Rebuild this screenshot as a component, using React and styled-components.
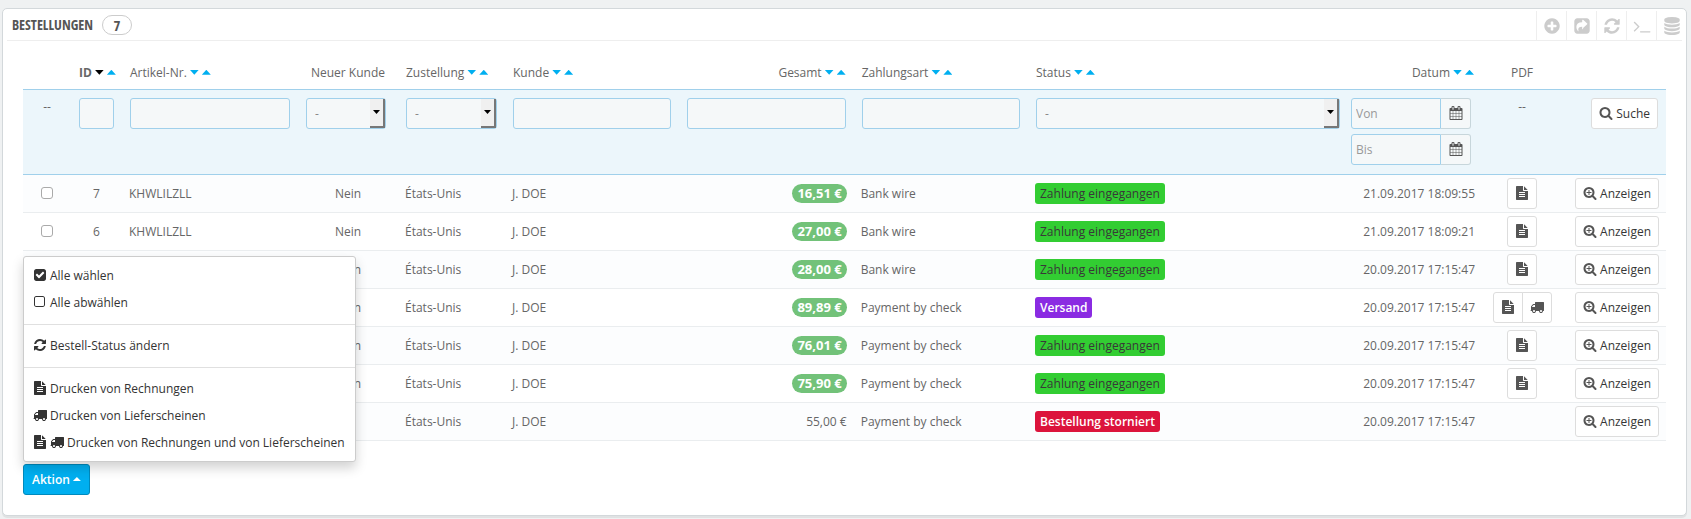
import React from "react";
import styled, { createGlobalStyle, css } from "styled-components";

const GlobalStyle = createGlobalStyle`
  *, *::before, *::after { box-sizing: border-box; }
  body {
    margin: 0;
    background: #eff1f2;
    color: #666;
    font: 12px/17px "Open Sans", "Noto Sans", sans-serif;
  }
  button, input, select { font: inherit; color: inherit; margin: 0; }
`;

/* ---------- icons (1792-unit grid) ---------- */

const paths = {
  plus: "M1344 960v-128q0-26-19-45t-45-19h-256v-256q0-26-19-45t-45-19h-128q-26 0-45 19t-19 45v256h-256q-26 0-45 19t-19 45v128q0 26 19 45t45 19h256v256q0 26 19 45t45 19h128q26 0 45-19t19-45v-256h256q26 0 45-19t19-45zm320-64q0 209-103 385.5t-279.5 279.5-385.5 103-385.5-103-279.5-279.5-103-385.5 103-385.5 279.5-279.5 385.5-103 385.5 103 279.5 279.5 103 385.5z",
  share: "M1005 1085l410-370q25-25 0-60l-410-370q-30-25-60-10-30 15-30 50v190q-300 5-440 130t-140 360q0 220 150 390 30 30 50 15 18-12 8-50-55-200 35-300 85-95 337-95v190q0 35 30 50 30 10 60-20zm659-669v960q0 119-84.5 203.5t-203.5 84.5h-960q-119 0-203.5-84.5t-84.5-203.5v-960q0-119 84.5-203.5t203.5-84.5h960q119 0 203.5 84.5t84.5 203.5z",
  refresh: "M1639 1056q0 5-1 7-64 268-268 434.5t-478 166.5q-146 0-282.5-55t-243.5-157l-129 129q-19 19-45 19t-45-19-19-45v-448q0-26 19-45t45-19h448q26 0 45 19t19 45-19 45l-137 137q71 66 161 102t187 36q134 0 250-65t186-179q11-17 53-117 8-23 30-23h192q13 0 22.5 9.5t9.5 22.5zm25-800v448q0 26-19 45t-45 19h-448q-26 0-45-19t-19-45 19-45l138-138q-148-137-349-137-134 0-250 65t-186 179q-11 17-53 117-8 23-30 23h-199q-13 0-22.5-9.5t-9.5-22.5v-7q65-268 270-434.5t480-166.5q146 0 284 55.5t245 156.5l130-129q19-19 45-19t45 19 19 45z",
  terminal: "M649 983l-466 466q-10 10-23 10t-23-10l-50-50q-10-10-10-23t10-23l393-393-393-393q-10-10-10-23t10-23l50-50q10-10 23-10t23 10l466 466q10 10 10 23t-10 23zm1079 457v64q0 14-9 23t-23 9h-960q-14 0-23-9t-9-23v-64q0-14 9-23t23-9h960q14 0 23 9t9 23z",
  database: "M896 768q237 0 443-43t325-127v170q0 69-103 128t-280 93.5-385 34.5-385-34.5-280-93.5-103-128v-170q119 84 325 127t443 43zm0 768q237 0 443-43t325-127v170q0 69-103 128t-280 93.5-385 34.5-385-34.5-280-93.5-103-128v-170q119 84 325 127t443 43zm0-384q237 0 443-43t325-127v170q0 69-103 128t-280 93.5-385 34.5-385-34.5-280-93.5-103-128v-170q119 84 325 127t443 43zm0-1152q208 0 385 34.5t280 93.5 103 128v128q0 69-103 128t-280 93.5-385 34.5-385-34.5-280-93.5-103-128v-128q0-69 103-128t280-93.5 385-34.5z",
  search: "M1216 832q0-185-131.5-316.5t-316.5-131.5-316.5 131.5-131.5 316.5 131.5 316.5 316.5 131.5 316.5-131.5 131.5-316.5zm512 832q0 52-38 90t-90 38q-54 0-90-38l-343-342q-179 124-399 124-143 0-273.5-55.5t-225-150-150-225-55.5-273.5 55.5-273.5 150-225 225-150 273.5-55.5 273.5 55.5 225 150 150 225 55.5 273.5q0 220-124 399l343 343q37 37 37 90z",
  zoomIn: "M1088 800v64q0 13-9.5 22.5t-22.5 9.5h-224v224q0 13-9.5 22.5t-22.5 9.5h-64q-13 0-22.5-9.5t-9.5-22.5v-224h-224q-13 0-22.5-9.5t-9.5-22.5v-64q0-13 9.5-22.5t22.5-9.5h224v-224q0-13 9.5-22.5t22.5-9.5h64q13 0 22.5 9.5t9.5 22.5v224h224q13 0 22.5 9.5t9.5 22.5zm128 32q0-185-131.5-316.5t-316.5-131.5-316.5 131.5-131.5 316.5 131.5 316.5 316.5 131.5 316.5-131.5 131.5-316.5zm512 832q0 53-37.5 90.5t-90.5 37.5q-54 0-90-38l-343-342q-179 124-399 124-143 0-273.5-55.5t-225-150-150-225-55.5-273.5 55.5-273.5 150-225 225-150 273.5-55.5 273.5 55.5 225 150 150 225 55.5 273.5q0 220-124 399l343 343q37 37 37 90z",
  file: "M1596 476q14 14 28 36h-472v-472q22 14 36 28zm-476 164h544v1056q0 40-28 68t-68 28h-1344q-40 0-68-28t-28-68v-1600q0-40 28-68t68-28h800v544q0 40 28 68t68 28zm160 736v-64q0-14-9-23t-23-9h-704q-14 0-23 9t-9 23v64q0 14 9 23t23 9h704q14 0 23-9t9-23zm0-256v-64q0-14-9-23t-23-9h-704q-14 0-23 9t-9 23v64q0 14 9 23t23 9h704q14 0 23-9t9-23zm0-256v-64q0-14-9-23t-23-9h-704q-14 0-23 9t-9 23v64q0 14 9 23t23 9h704q14 0 23-9t9-23z",
  truck: "M640 1408q0-52-38-90t-90-38-90 38-38 90 38 90 90 38 90-38 38-90zm-384-512h384v-256h-158q-13 0-22 9l-195 195q-9 9-9 22v30zm1280 512q0-52-38-90t-90-38-90 38-38 90 38 90 90 38 90-38 38-90zm256-1088v1024q0 15-4 26.5t-13.5 18.5-16.5 11.5-23.5 6-22.5 2-25.5 0-22.5-.5q0 106-75 181t-181 75-181-75-75-181h-384q0 106-75 181t-181 75-181-75-75-181h-64q-3 0-22.5.5t-25.5 0-22.5-2-23.5-6-16.5-11.5-13.5-18.5-4-26.5q0-26 19-45t45-19v-320q0-8-.5-35t0-38 2.5-34.5 6.5-37 14-30.5 22.5-30l198-198q19-19 50.5-32t58.5-13h160v-192q0-26 19-45t45-19h1024q26 0 45 19t19 45z",
  calendar: "M192 1664h288v-288h-288v288zm352 0h320v-288h-320v288zm-352-352h288v-320h-288v320zm352 0h320v-320h-320v320zm-352-384h288v-288h-288v288zm736 736h320v-288h-320v288zm-384-736h320v-288h-320v288zm768 736h288v-288h-288v288zm-384-352h320v-320h-320v320zm-352-864v-288q0-13-9.5-22.5t-22.5-9.5h-64q-13 0-22.5 9.5t-9.5 22.5v288q0 13 9.5 22.5t22.5 9.5h64q13 0 22.5-9.5t9.5-22.5zm736 864h288v-320h-288v320zm-384-384h320v-288h-320v288zm384 0h288v-288h-288v288zm32-480v-288q0-13-9.5-22.5t-22.5-9.5h-64q-13 0-22.5 9.5t-9.5 22.5v288q0 13 9.5 22.5t22.5 9.5h64q13 0 22.5-9.5t9.5-22.5zm384-64v1280q0 52-38 90t-90 38h-1408q-52 0-90-38t-38-90v-1280q0-52 38-90t90-38h128v-96q0-66 47-113t113-47h64q66 0 113 47t47 113v96h384v-96q0-66 47-113t113-47h64q66 0 113 47t47 113v96h128q52 0 90 38t38 90z",
  checked: "M813 1299l614-614q19-19 19-45t-19-45l-102-102q-19-19-45-19t-45 19l-467 467-211-211q-19-19-45-19t-45 19l-102 102q-19 19-19 45t19 45l358 358q19 19 45 19t45-19zm851-883v960q0 119-84.5 203.5t-203.5 84.5h-960q-119 0-203.5-84.5t-84.5-203.5v-960q0-119 84.5-203.5t203.5-84.5h960q119 0 203.5 84.5t84.5 203.5z",
  square: "M1248 256h-832q-66 0-113 47t-47 113v832q0 66 47 113t113 47h832q66 0 113-47t47-113v-832q0-66-47-113t-113-47zm288 160v832q0 119-84.5 203.5t-203.5 84.5h-832q-119 0-203.5-84.5t-84.5-203.5v-832q0-119 84.5-203.5t203.5-84.5h832q119 0 203.5 84.5t84.5 203.5z",
};

const Svg = styled.svg`
  flex: none;
  display: block;
  width: ${(p) => p.$size}px;
  height: ${(p) => p.$size}px;
  fill: currentColor;
`;

function Icon({ name, size = 14 }) {
  return (
    <Svg $size={size} viewBox="0 0 1792 1792" aria-hidden="true">
      <path d={paths[name]} />
    </Svg>
  );
}

/* ---------- panel ---------- */

const Page = styled.main`
  padding: 8px 4px 4px 2px;
`;

const Panel = styled.section`
  background: #fff;
  border: 1px solid #d3d8db;
  border-radius: 5px;
  box-shadow: 0 2px 0 rgba(0, 0, 0, 0.06);
  padding: 0 4px 20px;
`;

const Heading = styled.header`
  display: flex;
  align-items: stretch;
  justify-content: space-between;
  height: 32px;
  border-bottom: 1px solid #eee;
`;

const Title = styled.h1`
  display: flex;
  align-items: center;
  gap: 9px;
  margin: 0;
  padding-left: 5px;
  color: #555;
  font: 400 14px/20px "Ubuntu Condensed", "Open Sans Condensed", "Liberation Sans Narrow", "Liberation Sans", sans-serif;
  text-transform: uppercase;
`;

const Count = styled.span`
  width: 30px;
  height: 20px;
  border: 1px solid #ccc;
  border-radius: 10px;
  font-size: 15px;
  font-weight: 700;
  line-height: 18px;
  text-align: center;
`;

const Tools = styled.nav`
  display: flex;
  margin-right: -4px;
  padding-top: 2px;
`;

const Tool = styled.a`
  display: grid;
  place-items: center;
  width: 30px;
  border-left: 1px solid #eee;
  color: #ccc;
`;

const Body = styled.div`
  padding: 16px 16px 0;
`;

/* ---------- table ---------- */

const Table = styled.table`
  width: 100%;
  table-layout: fixed;
  border-collapse: collapse;
`;

const Col = styled.col`
  width: ${(p) => (p.$w ? `${p.$w}px` : "auto")};
`;

const HeadCell = styled.th`
  height: 32px;
  padding: 0 8px 1px;
  font-weight: ${(p) => (p.$bold ? 700 : 400)};
  text-align: ${(p) => p.$align || "left"};
  white-space: nowrap;
`;

const HeadInner = styled.span`
  display: inline-flex;
  align-items: center;
  gap: 3px;
`;

const Sort = styled.button`
  width: 9px;
  height: 5px;
  padding: 0;
  border: 0;
  background: ${(p) => (p.$active ? "#000" : "#00aff0")};
  clip-path: ${(p) => (p.$up ? "polygon(50% 0, 100% 100%, 0 100%)" : "polygon(0 0, 100% 0, 50% 100%)")};
`;

const FilterRow = styled.tr`
  height: 85px;
  background: #ecf6fb;
  border: solid #a0d0eb;
  border-width: 1px 0;
`;

const FilterCell = styled.td`
  padding: ${(p) => (p.$tight ? "8px 3px 8px 8px" : "8px")};
  vertical-align: top;
  text-align: ${(p) => p.$align || "left"};
`;

const field = css`
  display: block;
  width: 100%;
  height: 31px;
  padding: 0 8px;
  border: 1px solid #a0d0eb;
  border-radius: 3px;
  background: #f5f8f9;
  color: #888;
`;

const TextField = styled.input`
  ${field}
`;

const SelectBox = styled.div`
  position: relative;
  max-width: ${(p) => (p.$max ? `${p.$max}px` : "none")};
`;

const SelectField = styled.select`
  ${field}
  appearance: none;
`;

const SelectArrow = styled.span`
  position: absolute;
  inset: 1px 1px 1px auto;
  display: grid;
  place-items: center;
  width: 15px;
  background: #f0f0f0;
  border: solid #777;
  border-width: 0 2px 2px 0;
  pointer-events: none;

  &::after {
    content: "";
    width: 7px;
    height: 4px;
    background: #000;
    clip-path: polygon(0 0, 100% 0, 50% 100%);
  }
`;

const DateStack = styled.div`
  display: grid;
  gap: 5px;
  width: 120px;
`;

const DateGroup = styled.div`
  display: flex;
`;

const DateField = styled.input`
  ${field}
  flex: 1;
  min-width: 0;
  padding: 0 4px;
  border-radius: 3px 0 0 3px;
  &::placeholder { color: #999; opacity: 1; }
`;

const DateAddon = styled.button`
  display: grid;
  place-items: center;
  width: 30px;
  height: 31px;
  padding: 0;
  border: 1px solid #c7d6db;
  border-left: 0;
  border-radius: 0 3px 3px 0;
  background: #f5f8f9;
  color: #555;
`;

const Row = styled.tr`
  height: 38px;
  border-bottom: 1px solid #eaedef;
  &:nth-child(odd) { background: #fcfdfe; }
`;

const Cell = styled.td`
  padding: 3px 7px;
  text-align: ${(p) => p.$align || "left"};
  white-space: nowrap;
`;

const Check = styled.input`
  appearance: none;
  display: block;
  width: 12px;
  height: 12px;
  margin: 0 auto;
  border: 1px solid #aaa;
  border-radius: 3px;
  background: #fff;
`;

const Amount = styled.span`
  ${(p) =>
    p.$paid &&
    css`
      display: inline-block;
      padding: 0 5px;
      border-radius: 10px;
      background: #72c279;
      color: #fff;
      font-size: 13px;
      font-weight: 700;
      line-height: 19px;
    `}
`;

const tones = {
  paid: ["#32cd32", "#383838", 400],
  shipped: ["#8a2be2", "#fff", 600],
  cancelled: ["#dc143c", "#fff", 600],
};

const Status = styled.span`
  display: inline-block;
  padding: 0 5px;
  border-radius: 3px;
  background: ${(p) => tones[p.$tone][0]};
  color: ${(p) => tones[p.$tone][1]};
  font-weight: ${(p) => tones[p.$tone][2]};
  line-height: 21px;
`;

const Button = styled.button`
  display: inline-flex;
  align-items: center;
  justify-content: center;
  gap: 3px;
  height: 31px;
  padding: 0 7px;
  border: 1px solid #ddd;
  border-radius: 3px;
  background: #fff;
  color: #363636;
  vertical-align: top;
  svg { color: #555; }
`;

const ButtonGroup = styled.div`
  display: flex;
  justify-content: center;

  ${Button}:not(:first-child) {
    margin-left: -1px;
    border-radius: 0 3px 3px 0;
  }
  ${Button}:first-child:not(:last-child) { border-radius: 3px 0 0 3px; }
`;

/* ---------- bulk actions ---------- */

const Bulk = styled.div`
  position: relative;
  display: inline-block;
  margin-top: 23px;
  vertical-align: top;
`;

const BulkButton = styled.button`
  display: flex;
  align-items: center;
  gap: 3px;
  height: 31px;
  padding: 0 8px;
  border: 1px solid #008abd;
  border-radius: 3px;
  background: #00aff0;
  color: #fff;
  font-weight: 600;
`;

const Caret = styled.span`
  width: 8px;
  height: 4px;
  background: currentColor;
  clip-path: polygon(50% 0, 100% 100%, 0 100%);
`;

const Menu = styled.ul`
  position: absolute;
  left: 0;
  bottom: calc(100% + 2px);
  margin: 0;
  padding: 5px 0;
  list-style: none;
  background: #fff;
  border: 1px solid #ccc;
  border-radius: 3px;
  box-shadow: 0 6px 12px rgba(0, 0, 0, 0.18);
  color: #333;
`;

const MenuLink = styled.a`
  display: flex;
  align-items: center;
  gap: 3px;
  height: 27px;
  padding: 0 10px 0 9px;
  color: inherit;
  text-decoration: none;
  white-space: nowrap;
`;

const Divider = styled.li`
  height: 1px;
  margin: 8px 0 7px;
  background: #e0e0e0;
`;

/* ---------- data ---------- */

const tools = [
  ["plus", "Neu"],
  ["share", "Exportieren"],
  ["refresh", "Aktualisieren"],
  ["terminal", "SQL anzeigen"],
  ["database", "SQL exportieren"],
];

const columns = [
  { width: 48 },
  { label: "ID", width: 51, sort: true, bold: true },
  { label: "Artikel-Nr.", width: 176, sort: true },
  { label: "Neuer Kunde", width: 100, align: "center" },
  { label: "Zustellung", width: 107, sort: true },
  { label: "Kunde", sort: true },
  { label: "Gesamt", sort: true, align: "right" },
  { label: "Zahlungsart", sort: true },
  { label: "Status", width: 315, sort: true },
  { label: "Datum", width: 139, sort: true, align: "right" },
  { label: "PDF", width: 80, align: "center" },
  { width: 104 },
];

const orders = [
  [7, "16,51 €", "Bank wire", "paid", "21.09.2017 18:09:55", ["file"]],
  [6, "27,00 €", "Bank wire", "paid", "21.09.2017 18:09:21", ["file"]],
  [5, "28,00 €", "Bank wire", "paid", "20.09.2017 17:15:47", ["file"]],
  [4, "89,89 €", "Payment by check", "shipped", "20.09.2017 17:15:47", ["file", "truck"]],
  [3, "76,01 €", "Payment by check", "paid", "20.09.2017 17:15:47", ["file"]],
  [2, "75,90 €", "Payment by check", "paid", "20.09.2017 17:15:47", ["file"]],
  [1, "55,00 €", "Payment by check", "cancelled", "20.09.2017 17:15:47", []],
];

const statusText = {
  paid: "Zahlung eingegangen",
  shipped: "Versand",
  cancelled: "Bestellung storniert",
};

const pdfLabel = { file: "Rechnung", truck: "Lieferschein" };

const menu = [
  [["checked"], "Alle wählen"],
  [["square"], "Alle abwählen"],
  null,
  [["refresh"], "Bestell-Status ändern"],
  null,
  [["file"], "Drucken von Rechnungen"],
  [["truck"], "Drucken von Lieferscheinen"],
  [["file", "truck"], "Drucken von Rechnungen und von Lieferscheinen"],
];

function Select({ label, max }) {
  return (
    <SelectBox $max={max}>
      <SelectField aria-label={label}>
        <option>-</option>
      </SelectField>
      <SelectArrow />
    </SelectBox>
  );
}

function DateInput({ label }) {
  return (
    <DateGroup>
      <DateField placeholder={label} aria-label={`Datum ${label}`} />
      <DateAddon type="button" aria-label={`Kalender ${label}`}>
        <Icon name="calendar" />
      </DateAddon>
    </DateGroup>
  );
}

function Header({ label, sort, bold, align }) {
  return (
    <HeadCell scope="col" $bold={bold} $align={align}>
      <HeadInner>
        {label}
        {sort && (
          <>
            <Sort type="button" $active={bold} aria-label={`${label} absteigend`} />
            <Sort type="button" $up aria-label={`${label} aufsteigend`} />
          </>
        )}
      </HeadInner>
    </HeadCell>
  );
}

function Filters() {
  return (
    <FilterRow>
      <FilterCell $align="center">--</FilterCell>
      <FilterCell><TextField aria-label="ID" /></FilterCell>
      <FilterCell><TextField aria-label="Artikel-Nr." /></FilterCell>
      <FilterCell><Select label="Neuer Kunde" max={80} /></FilterCell>
      <FilterCell><Select label="Zustellung" /></FilterCell>
      <FilterCell><TextField aria-label="Kunde" /></FilterCell>
      <FilterCell><TextField aria-label="Gesamt" /></FilterCell>
      <FilterCell><TextField aria-label="Zahlungsart" /></FilterCell>
      <FilterCell $tight><Select label="Status" /></FilterCell>
      <FilterCell>
        <DateStack>
          <DateInput label="Von" />
          <DateInput label="Bis" />
        </DateStack>
      </FilterCell>
      <FilterCell $align="center">--</FilterCell>
      <FilterCell $align="right">
        <Button type="submit"><Icon name="search" />Suche</Button>
      </FilterCell>
    </FilterRow>
  );
}

function Order({ order }) {
  const [id, total, payment, status, date, pdfs] = order;
  return (
    <Row>
      <Cell><Check type="checkbox" aria-label={`Bestellung ${id}`} /></Cell>
      <Cell $align="center">{id}</Cell>
      <Cell>KHWLILZLL</Cell>
      <Cell $align="center">{id > 1 ? "Nein" : "Ja"}</Cell>
      <Cell>États-Unis</Cell>
      <Cell>J. DOE</Cell>
      <Cell $align="right"><Amount $paid={status !== "cancelled"}>{total}</Amount></Cell>
      <Cell>{payment}</Cell>
      <Cell><Status $tone={status}>{statusText[status]}</Status></Cell>
      <Cell $align="right">{date}</Cell>
      <Cell>
        <ButtonGroup>
          {pdfs.map((p) => (
            <Button key={p} type="button" aria-label={pdfLabel[p]}><Icon name={p} /></Button>
          ))}
        </ButtonGroup>
      </Cell>
      <Cell $align="right">
        <Button type="button"><Icon name="zoomIn" />Anzeigen</Button>
      </Cell>
    </Row>
  );
}

export default function App() {
  return (
    <Page>
      <GlobalStyle />
      <Panel>
        <Heading>
          <Title>Bestellungen <Count>7</Count></Title>
          <Tools>
            {tools.map(([icon, label]) => (
              <Tool key={icon} href="#" aria-label={label}><Icon name={icon} size={18} /></Tool>
            ))}
          </Tools>
        </Heading>
        <Body>
          <Table>
            <colgroup>
              {columns.map((c, i) => <Col key={i} $w={c.width} />)}
            </colgroup>
            <thead>
              <tr>{columns.map((c, i) => <Header key={i} {...c} />)}</tr>
              <Filters />
            </thead>
            <tbody>
              {orders.map((o) => <Order key={o[0]} order={o} />)}
            </tbody>
          </Table>
          <Bulk>
            <BulkButton type="button" aria-expanded="true">Aktion<Caret /></BulkButton>
            <Menu>
              {menu.map((item, i) =>
                item ? (
                  <li key={i}>
                    <MenuLink href="#">
                      {item[0].map((n) => <Icon key={n} name={n} />)}
                      {item[1]}
                    </MenuLink>
                  </li>
                ) : (
                  <Divider key={i} role="separator" />
                )
              )}
            </Menu>
          </Bulk>
        </Body>
      </Panel>
    </Page>
  );
}
